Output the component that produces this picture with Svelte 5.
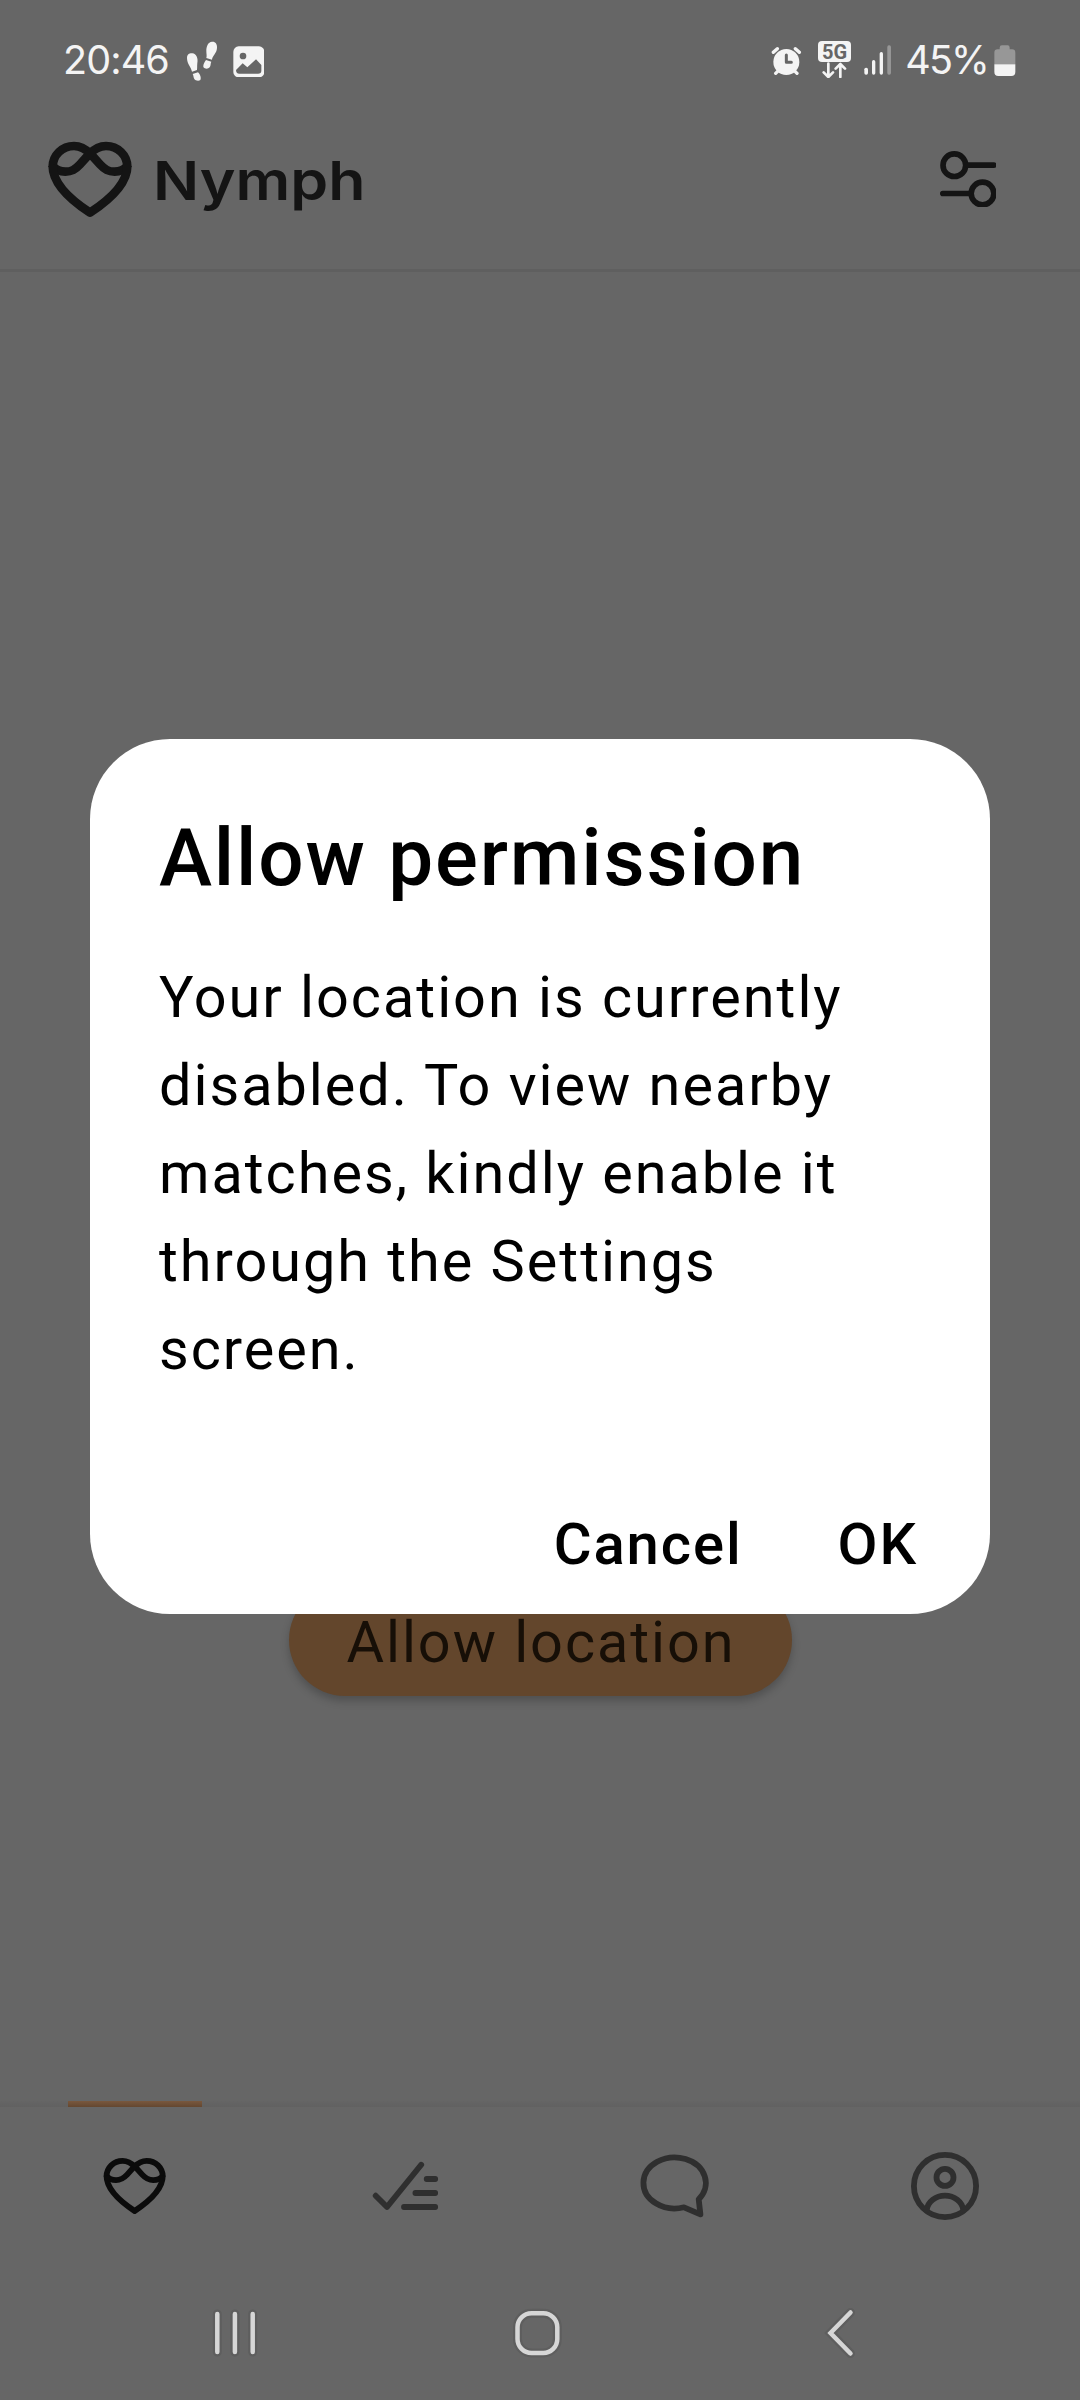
<script>
  const message = [
    'Your location is currently',
    'disabled. To view nearby',
    'matches, kindly enable it',
    'through the Settings',
    'screen.'
  ];
</script>

{#snippet heart(cls)}
  <svg class={cls} viewBox="0 0 252 230">
    <g fill="none" stroke="currentColor" stroke-linejoin="round">
      <path d="M14 78C14 42 43 15 78 15C101 15 116 27 128 39L156 70C171 86 181 92 200 92C216 92 228 87 238 75" />
      <path d="M238 78C238 42 209 15 174 15C151 15 136 27 124 39L96 70C81 86 71 92 52 92C36 92 24 87 14 75" />
      <path d="M14 75C14 128 68 177 126 215C184 177 238 128 238 75" />
    </g>
  </svg>
{/snippet}

<div class="screen">
  <div class="status">
    <span class="clock">20:46</span>
    <svg class="steps" viewBox="438 64 96 120">
      <g fill="#f4f4f4">
        <path d="M441 115C441 104 449 100 457 101C469 102 475 116 472 130C471 139 472 144 471 151L456 156C453 141 441 133 441 115Z" />
        <path d="M458 163L474 158C481 164 484 174 481 181C476 185 466 183 463 178C460 173 461 168 458 163Z" />
        <path d="M516 66C526 65 532 73 531 85C530 102 517 108 516 120L499 115C501 108 499 103 499 94C499 80 504 67 516 66Z" />
        <path d="M498 121L514 126C511 131 513 137 509 143C504 149 494 148 490 142C489 134 494 127 498 121Z" />
      </g>
    </svg>
    <svg class="photo" viewBox="578 77 95 95">
      <rect x="579" y="78" width="93" height="93" rx="16" fill="#f4f4f4" />
      <circle cx="608" cy="107" r="10" fill="#666" />
      <path d="M587 149L607 129L621 141L647 117L663 134V151Q663 160 653 160H597Q587 160 587 149Z" fill="#666" />
    </svg>
    <svg class="alarm" viewBox="64 78 92 90">
      <g stroke="#f4f4f4" stroke-width="10" stroke-linecap="round">
        <path d="M71 97L83 86M137 86L149 97M84 154L78 160M136 154L142 160" />
      </g>
      <circle cx="110" cy="126" r="39" fill="#f4f4f4" />
      <path d="M110 105V127H125" fill="none" stroke="#666" stroke-width="9" stroke-linecap="round" stroke-linejoin="round" />
    </svg>
    <div class="network">
      <span class="badge">5G</span>
      <svg class="arrows" viewBox="204 126 99 48">
        <path d="M235 131V170M221 157L235 171L249 157M271 171V133M257 146L271 132L285 146" fill="none" stroke="#f4f4f4" stroke-width="8" stroke-linecap="round" stroke-linejoin="round" />
      </svg>
    </div>
    <svg class="signal" viewBox="342 76 82 90">
      <g fill="#f4f4f4">
        <rect x="343" y="144" width="11" height="21" rx="5" />
        <rect x="366" y="121" width="10" height="44" rx="5" />
        <rect x="389" y="97" width="10" height="68" rx="5" />
        <rect x="412" y="77" width="11" height="88" rx="5" fill="#979797" />
      </g>
    </svg>
    <span class="percent">45%</span>
    <svg class="battery" viewBox="734 74 65 94">
      <path d="M735 132V97Q735 87 745 87H751V82Q751 75 758 75H775Q781 75 781 82V87H788Q798 87 798 97V132Z" fill="#979797" />
      <path d="M735 132H798V155Q798 167 786 167H747Q735 167 735 155Z" fill="#f4f4f4" />
    </svg>
  </div>

  <header>
    {@render heart('logo')}
    <span class="brand">Nymph</span>
    <svg class="filter" viewBox="119 92 170 170">
      <g fill="none" stroke="#141414" stroke-width="17" stroke-linecap="round">
        <circle cx="162" cy="134.500" r="34" />
        <circle cx="246.500" cy="219.500" r="34" />
        <path d="M204 134.500H280.500M127.500 219.500H204" />
      </g>
    </svg>
  </header>

  <main>
    <button class="location">Allow location</button>
  </main>

  <div class="edge"><i class="indicator"></i></div>
  <nav class="tabs">
    <div class="tab active">
      {@render heart('tab-heart')}
    </div>
    <div class="tab">
      <svg class="icon" viewBox="365 2146 80 80">
        <path d="M375.700 2195.700L387 2207L421.200 2164.700M426.700 2179H435.200M415.400 2193H435.200M404 2207H435.200" />
      </svg>
    </div>
    <div class="tab">
      <svg class="icon" viewBox="635 2146 80 80">
        <path d="M684 2207.300A31.200 25.500 0 1 1 698.700 2199.200L700.400 2214.300Z" />
      </svg>
    </div>
    <div class="tab">
      <svg class="icon" viewBox="905 2146 80 80">
        <circle cx="945" cy="2186" r="31.100" />
        <circle cx="945" cy="2177.400" r="8.500" />
        <path d="M926.700 2210A18.400 16 0 0 1 963.300 2210" />
      </svg>
    </div>
  </nav>

  <div class="system">
    <svg viewBox="210 2303 50 60">
      <path d="M217.300 2314V2352M234.900 2314V2352M252.700 2314V2352" class="halo" />
      <path d="M217.300 2314V2352M234.900 2314V2352M252.700 2314V2352" />
    </svg>
    <svg viewBox="512.500 2303 50 60">
      <rect x="517" y="2313.200" width="39.800" height="39.800" rx="14" class="halo" />
      <rect x="517" y="2313.200" width="39.800" height="39.800" rx="14" />
    </svg>
    <svg viewBox="815 2303 50 60">
      <path d="M850.500 2312.500L830.500 2333L850.500 2353.500" class="halo" />
      <path d="M850.500 2312.500L830.500 2333L850.500 2353.500" />
    </svg>
  </div>

  <div class="dialog" role="dialog" aria-modal="true">
    <h1>Allow permission</h1>
    <p>
      {#each message as line}
        <span>{line}</span>
      {/each}
    </p>
    <div class="actions">
      <button>Cancel</button>
      <button>OK</button>
    </div>
  </div>
</div>

<style>
  :global(body) {
    background: #666;
  }
  .screen {
    position: relative;
    display: flex;
    flex-direction: column;
    width: 1080px;
    height: 2400px;
    overflow: hidden;
    background: #666;
    font-family: Roboto, 'Liberation Sans', sans-serif;
  }
  svg {
    display: block;
    flex: none;
  }
  button {
    border: 0;
    padding: 0;
    background: none;
    font: inherit;
    letter-spacing: inherit;
    color: inherit;
    white-space: nowrap;
  }
  .status {
    display: flex;
    align-items: flex-start;
    height: 120px;
    box-sizing: border-box;
    padding: 40px 63px 0 63px;
    color: #f4f4f4;
    font: 400 39.5px/41px Inter, sans-serif;
  }
  .clock {
    width: 123px;
    letter-spacing: -0.9px;
  }
  .steps {
    width: 32px;
    height: 40px;
    margin-top: 1px;
  }
  .photo {
    width: 31.700px;
    height: 31.700px;
    margin: 5.600px 0 0 14.700px;
  }
  .alarm {
    width: 30.700px;
    height: 30px;
    margin: 6px 0 0 507px;
  }
  .network {
    width: 33px;
    margin: 1px 0 0 16px;
  }
  .badge {
    display: block;
    height: 21px;
    border-radius: 4px;
    background: #f4f4f4;
    color: #666;
    font: 700 20px/22px Roboto, sans-serif;
    text-align: center;
  }
  .arrows {
    width: 33px;
    height: 16px;
  }
  .signal {
    width: 27.300px;
    height: 30px;
    margin: 5.300px 0 0 13px;
  }
  .percent {
    width: 84px;
    margin-left: 14px;
    letter-spacing: -2px;
  }
  .battery {
    width: 21.700px;
    height: 31.300px;
    margin-top: 4.700px;
    margin-left: 5px;
  }
  header {
    display: flex;
    align-items: flex-start;
    height: 152px;
    box-sizing: border-box;
    padding: 21px 83.700px 0 48px;
    border-bottom: 3px solid #5f5f5f;
    color: #141414;
  }
  .logo {
    width: 84px;
    height: 76.700px;
    stroke-width: 26px;
  }
  .brand {
    flex: 1;
    margin: 7px 0 0 20.500px;
    font: 600 54px/66px Inter, sans-serif;
    transform-origin: left center;
    transform: scaleX(1.126);
  }
  .filter {
    width: 56.700px;
    height: 56.700px;
    margin-top: 9.700px;
  }
  main {
    flex: 1;
    display: flex;
    flex-direction: column;
    align-items: center;
    justify-content: flex-end;
    padding-bottom: 405px;
  }
  .location {
    width: 503px;
    height: 112px;
    box-sizing: border-box;
    padding: 4px 0 0 2px;
    border-radius: 56px;
    background: #63462c;
    box-shadow: 0 5px 8px rgba(0, 0, 0, 0.22);
    color: #170f07;
    font-size: 57.600px;
    letter-spacing: 1.950px;
  }
  .edge {
    height: 6px;
    padding-left: 68px;
    background: linear-gradient(#656565, #616161);
  }
  .indicator {
    display: block;
    width: 134px;
    height: 6px;
    background: linear-gradient(#79583e, #644730);
  }
  .tabs {
    display: flex;
    height: 157px;
    color: #2f2f2f;
  }
  .tab {
    display: flex;
    flex: 1;
    justify-content: center;
    align-items: center;
  }
  .active {
    color: #0b0b0b;
  }
  .tab-heart {
    width: 63.300px;
    height: 57.800px;
    stroke-width: 23px;
  }
  .icon {
    width: 80px;
    height: 80px;
    fill: none;
    stroke: currentColor;
    stroke-width: 5.800px;
    stroke-linecap: round;
    stroke-linejoin: round;
  }
  .system {
    display: flex;
    justify-content: space-between;
    height: 136px;
    box-sizing: border-box;
    padding: 39px 215px 0 210px;
  }
  .system svg {
    width: 50px;
    height: 60px;
    fill: none;
    stroke: #d6d6d6;
    stroke-width: 4.500px;
    stroke-linecap: round;
  }
  .system .halo {
    stroke: #5e5e5e;
    stroke-width: 9px;
  }
  .dialog {
    position: absolute;
    top: 739px;
    left: 90px;
    display: flex;
    flex-direction: column;
    width: 900px;
    height: 875px;
    box-sizing: border-box;
    padding: 67px 69px 20px;
    border-radius: 80px;
    background: #fff;
    color: #000;
  }
  h1 {
    margin: 0;
    font-size: 80px;
    font-weight: 500;
    line-height: 104px;
    letter-spacing: 1.800px;
    white-space: nowrap;
  }
  p {
    margin: 44px 0 0;
    font-size: 57.600px;
    line-height: 88px;
    letter-spacing: 1.980px;
  }
  p span {
    display: block;
    white-space: nowrap;
  }
  .actions {
    display: flex;
    justify-content: flex-end;
    gap: 95px;
    margin-top: auto;
    height: 100px;
    padding-right: 3px;
    font-size: 58px;
    font-weight: 500;
    letter-spacing: 1.900px;
  }
</style>
